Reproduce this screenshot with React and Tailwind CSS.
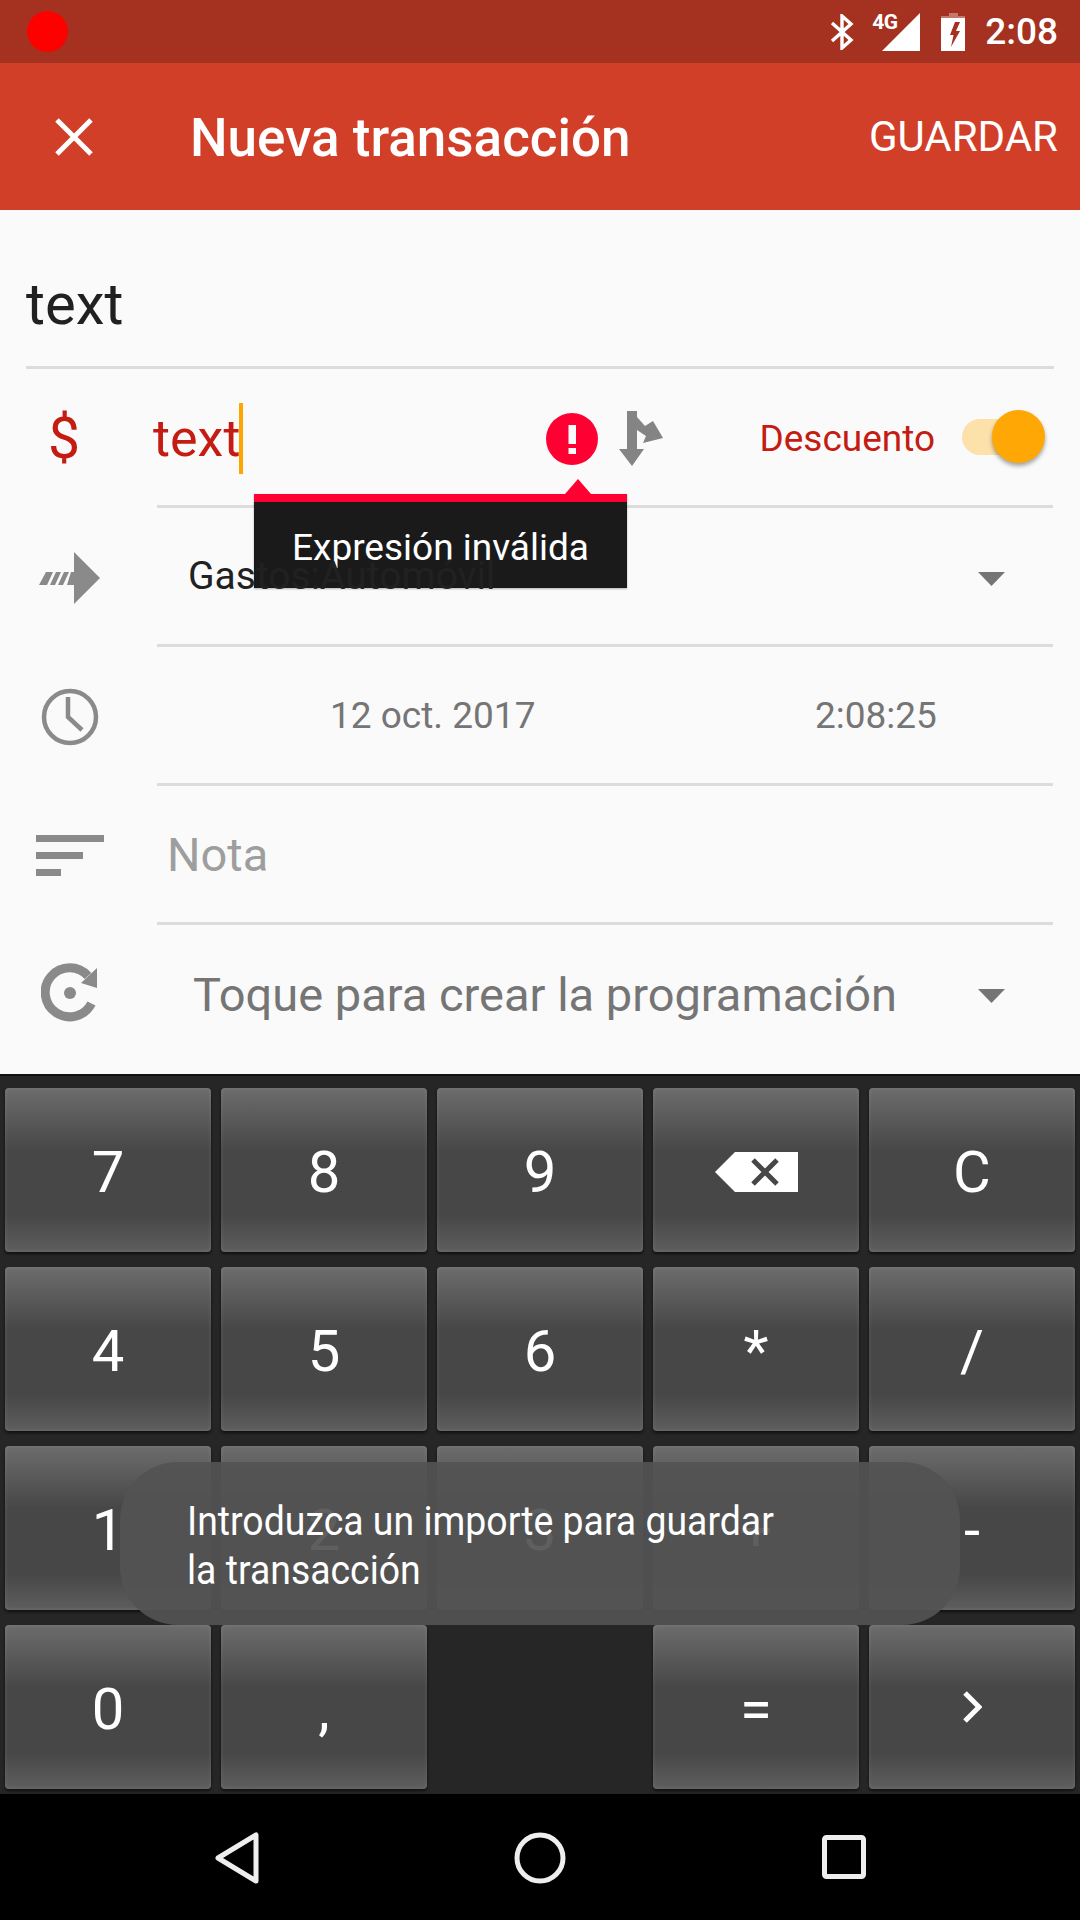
import React from 'react';

const font = { fontFamily: 'Roboto, sans-serif' };

function StatusBar() {
    return (
        <div className="h-[63px] bg-[#a53220] flex items-center text-white">
            <div className="ml-[27px] w-[41px] h-[41px] rounded-full bg-[#ff0000]" />
            <div className="ml-auto mr-[22px] flex items-center">
                {/* bluetooth */}
                <svg width="24" height="36" viewBox="0 0 24 36" className="mr-[28px] mt-[1px]" fill="none" stroke="#fff" strokeWidth="3.4">
                    <path d="M2 9 L21 26 L12 34 L12 2 L21 10 L2 27" />
                </svg>
                {/* 4G signal */}
                <div className="relative w-[38px] h-[38px] mr-[21px]">
                    <svg width="38" height="38" viewBox="0 0 38 38" className="absolute right-0 top-0">
                        <polygon points="38,0 38,38 0,38" fill="#fff" />
                    </svg>
                    <span className="absolute left-[-10px] top-[-1px] text-[21px] leading-[20px] font-bold tracking-[-0.5px]">4G</span>
                </div>
                {/* battery charging */}
                <svg width="24" height="38" viewBox="0 0 24 38" className="mr-[20px]">
                    <path d="M8 0 H17 V3 H24 V5 H0 V3 H8 Z" fill="#fff" fillOpacity="0.35" />
                    <path fillRule="evenodd" d="M0 5 H24 V38 H0 Z M14 9 L9 22 H12.5 L10 34 L19 18 H15 L19 9 Z" fill="#fff" />
                </svg>
                <span className="text-[37px] leading-none font-medium">2:08</span>
            </div>
        </div>
    );
}

function AppBar() {
    return (
        <div className="h-[147px] bg-[#d13f29] flex items-center text-white">
            <svg width="38" height="38" viewBox="0 0 38 38" className="ml-[55px]" stroke="#fff" strokeWidth="5">
                <path d="M2 2 L36 36 M36 2 L2 36" />
            </svg>
            <span className="ml-[97px] mt-[3px] text-[53px] leading-none font-medium">Nueva transacción</span>
            <span className="ml-auto mr-[22px] text-[42px] leading-none">GUARDAR</span>
        </div>
    );
}

function Chevron({ className }) {
    return (
        <svg width="27" height="14" viewBox="0 0 27 14" className={className}>
            <polygon points="0,0 27,0 13.5,14" fill="#757575" />
        </svg>
    );
}

function Row({ icon, children, last }) {
    return (
        <div className="h-[139px] flex">
            <div className="w-[157px] flex items-center relative shrink-0">{icon}</div>
            <div className={`flex-1 mr-[27px] flex items-center relative ${last ? '' : 'border-b-[3px] border-[#dcdcdc]'}`}>
                {children}
            </div>
        </div>
    );
}

function AmountRow() {
    return (
        <div className="h-[139px] flex">
            <div className="w-[153px] shrink-0 flex items-center">
                <span className="ml-[48px] text-[57px] leading-none text-[#c41c12]">$</span>
            </div>
            <div className="flex-1 flex items-center relative">
                <div className="absolute left-[4px] right-[27px] bottom-0 h-[3px] bg-[#dcdcdc]" />
                <span className="text-[52px] leading-none text-[#c41c12]">text</span>
                <div className="w-[4px] h-[71px] bg-[#ffa500] -ml-[1px]" />
                {/* error */}
                <svg width="52" height="52" viewBox="0 0 52 52" className="ml-[303px]">
                    <circle cx="26" cy="26" r="26" fill="#ff0033" />
                    <rect x="22.5" y="12" width="7.5" height="19" fill="#fafafa" />
                    <rect x="22.5" y="35" width="7.5" height="6" fill="#fafafa" />
                </svg>
                {/* split arrows */}
                <svg width="44" height="55" viewBox="0 0 44 55" className="ml-[21px]">
                    <path d="M8 0 H18 V6 L26 15 L34 10 L44 27 L24 32 L27 25 L18 19 V38 H25 L13 55 L0 38 H8 Z" fill="#848484" />
                </svg>
                <span className="ml-[96px] text-[37px] leading-none text-[#c41c12]">Descuento</span>
                {/* switch */}
                <div className="absolute left-[809px] top-[50px] w-[60px] h-[36px] rounded-full bg-[#fce1ab]" />
                <div className="absolute left-[839px] top-[41px] w-[53px] h-[53px] rounded-full bg-[#ffa805] shadow-[0_3px_4px_rgba(0,0,0,0.35)]" />
            </div>
        </div>
    );
}

function Key({ children }) {
    return (
        <div className="h-[164px] rounded-[4px] pt-[4px] flex items-center justify-center text-white text-[58px] leading-none bg-[linear-gradient(180deg,#6c6c6c_0%,#474747_38%,#474747_78%,#5e5e5e_100%)] shadow-[0_2px_3px_rgba(0,0,0,0.6),inset_0_0_4px_rgba(255,255,255,0.12)]">
            {children}
        </div>
    );
}

function Keypad() {
    return (
        <div className="h-[720px] bg-[#262626] border-t-[2px] border-[#111111] px-[5px] pt-[12px] grid grid-cols-[repeat(5,206px)] auto-rows-[164px] gap-x-[10px] gap-y-[15px]">
            <Key>7</Key>
            <Key>8</Key>
            <Key>9</Key>
            <Key>
                <svg width="83" height="40" viewBox="0 0 83 40">
                    <path d="M20 0 H83 V40 H20 L0 20 Z" fill="#fff" />
                    <path d="M38 8 L62 32 M62 8 L38 32" stroke="#474747" strokeWidth="5" />
                </svg>
            </Key>
            <Key>C</Key>
            <Key>4</Key>
            <Key>5</Key>
            <Key>6</Key>
            <Key>*</Key>
            <Key>/</Key>
            <Key>1</Key>
            <Key>2</Key>
            <Key>3</Key>
            <Key>+</Key>
            <Key>-</Key>
            <Key>0</Key>
            <Key>,</Key>
            <div />
            <Key>=</Key>
            <Key>
                <svg width="20" height="32" viewBox="0 0 20 32" fill="none" stroke="#fff" strokeWidth="5" className="-mt-[4px]">
                    <path d="M3 2 L17 16 L3 30" />
                </svg>
            </Key>
        </div>
    );
}

function NavBar() {
    return (
        <div className="h-[126px] bg-black flex items-center justify-center relative">
            <svg width="44" height="52" viewBox="0 0 44 52" fill="none" stroke="#eeeeee" strokeWidth="5" strokeLinejoin="round" className="absolute left-[215px] top-[38px]">
                <path d="M41 3 V49 L3 26 Z" />
            </svg>
            <svg width="52" height="52" viewBox="0 0 52 52" fill="none" stroke="#eeeeee" strokeWidth="5" className="absolute left-[514px] top-[38px]">
                <circle cx="26" cy="26" r="23" />
            </svg>
            <svg width="44" height="44" viewBox="0 0 44 44" fill="none" stroke="#eeeeee" strokeWidth="5" strokeLinejoin="round" className="absolute left-[822px] top-[41px]">
                <rect x="2.5" y="2.5" width="39" height="39" rx="2" />
            </svg>
        </div>
    );
}

export default function App() {
    return (
        <div className="w-[1080px] h-[1920px] relative overflow-hidden bg-[#fafafa]" style={font}>
            <StatusBar />
            <AppBar />
            {/* form */}
            <div className="h-[864px]">
                <div className="h-[159px] mx-[26px] flex items-center border-b-[3px] border-[#dcdcdc] text-[#212121]">
                    <span className="text-[58px] leading-none mt-[32px]">text</span>
                </div>
                <AmountRow />
                <Row icon={
                    <svg width="62" height="52" viewBox="0 0 62 52" className="ml-[39px]" fill="#8a8a8a">
                        <path d="M35 0 L61 26 L35 52 V33 H28 L32 20 H35 Z" />
                        <path d="M7 20 H14 L8 33 H0 Z M17 20 H22 L16 33 H11 Z M25 20 H30 L24 33 H19 Z" />
                    </svg>
                }>
                    <span className="relative z-10 ml-[31px] text-[39px] leading-none text-[#212121]">Gastos:Automóvil</span>
                    <Chevron className="absolute left-[821px] top-[64px]" />
                </Row>
                <Row icon={
                    <svg width="58" height="58" viewBox="0 0 58 58" className="ml-[41px]" fill="none" stroke="#8a8a8a" strokeWidth="4.5">
                        <circle cx="29" cy="29" r="26" />
                        <path d="M27 9 V29 L41 42" />
                    </svg>
                }>
                    <span className="absolute left-[173px] top-[50px] text-[37px] leading-none text-[#757575]">12 oct. 2017</span>
                    <span className="absolute left-[658px] top-[50px] text-[37px] leading-none text-[#757575]">2:08:25</span>
                </Row>
                <Row icon={
                    <div className="ml-[36px] flex flex-col gap-[10px]">
                        <div className="w-[68px] h-[7px] bg-[#8a8a8a]" />
                        <div className="w-[47px] h-[7px] bg-[#8a8a8a]" />
                        <div className="w-[25px] h-[7px] bg-[#8a8a8a]" />
                    </div>
                }>
                    <span className="ml-[10px] text-[47px] leading-none text-[#9e9e9e]">Nota</span>
                </Row>
                <Row last icon={
                    <svg width="58" height="60" viewBox="0 0 58 60" className="ml-[41px] -mt-[3px]">
                        <path d="M47 13 A24.5 24.5 0 1 0 50.5 40.5" fill="none" stroke="#8a8a8a" strokeWidth="9" />
                        <polygon points="56,5 56,25 40,20" fill="#8a8a8a" />
                        <circle cx="29" cy="30" r="6" fill="#8a8a8a" />
                    </svg>
                }>
                    <span className="ml-[36px] text-[47px] leading-none text-[#757575]">Toque para crear la programación</span>
                    <Chevron className="absolute left-[821px] top-[64px]" />
                </Row>
            </div>
            <Keypad />
            <NavBar />
            {/* validation tooltip */}
            <div className="absolute left-[254px] top-[494px] w-[373px] h-[94px] bg-[#1a1a1a] border-t-[8px] border-[#ff0033] flex items-center justify-center shadow-[0_1px_2px_rgba(0,0,0,0.3)]">
                <span className="mt-[4px] text-[37px] leading-none text-white">Expresión inválida</span>
            </div>
            <svg width="26" height="15" viewBox="0 0 26 15" className="absolute left-[565px] top-[479px]">
                <polygon points="13,0 26,15 0,15" fill="#ff0033" />
            </svg>
            {/* toast */}
            <div className="absolute z-20 left-[120px] top-[1462px] w-[840px] h-[163px] rounded-[58px] bg-[#535353]/[.93] pl-[67px] pt-[35px]">
                <p className="text-[40px] leading-[49px] text-white whitespace-nowrap origin-left scale-x-[.935]">Introduzca un importe para guardar<br />la transacción</p>
            </div>
        </div>
    );
}
